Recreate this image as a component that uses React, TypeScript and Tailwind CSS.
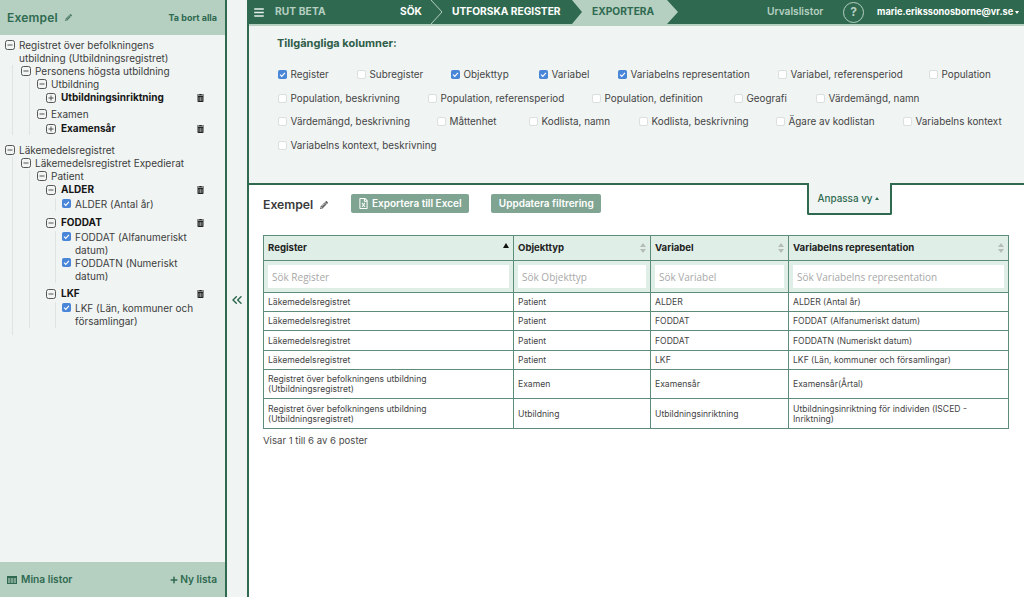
import React from "react";
import { FaBars, FaPencilAlt, FaPlus, FaRegFileExcel, FaTrashAlt } from "react-icons/fa";
import { ChevronsLeft } from "lucide-react";

const font = "font-['Inter','Liberation_Sans',sans-serif]";

function Toggle({ plus }: { plus?: boolean }) {
  return (
    <svg width="10" height="10" viewBox="0 0 10 10" className="shrink-0" fill="none" stroke="#444" strokeWidth="0.9">
      <rect x="0.5" y="0.5" width="9" height="9" rx="2" />
      <path d="M2.5 5h5" />
      {plus && <path d="M5 2.5v5" />}
    </svg>
  );
}

function Check({ on, size = 9 }: { on?: boolean; size?: number }) {
  return (
    <svg width={size} height={size} viewBox="0 0 10 10" className="shrink-0">
      {on ? (
        <>
          <rect width="10" height="10" rx="2" fill="#4a86d8" />
          <path d="M2.3 5.2l1.9 1.9 3.5-4" stroke="#fff" strokeWidth="1.3" fill="none" />
        </>
      ) : (
        <rect x="0.5" y="0.5" width="9" height="9" rx="2" fill="#fff" stroke="#d5d9d8" />
      )}
    </svg>
  );
}

function Label({ children, plus, w }: { children: React.ReactNode; plus?: boolean; w: string }) {
  return (
    <div className="flex items-start h-auto">
      <div className="mt-px w-[14px] shrink-0"><Toggle plus={plus} /></div>
      <div className={`${w} text-[10px] leading-[13px] text-[#3d3d3d]`}>{children}</div>
    </div>
  );
}

function Bold({ text, minus, className }: { text: string; minus?: boolean; className?: string }) {
  return (
    <div className={`flex items-center h-[13px] ${className ?? ""}`}>
      <div className="w-[15px] shrink-0"><Toggle plus={!minus} /></div>
      <div className="flex-1 text-[10px] font-bold text-[#161616]">{text}</div>
      <FaTrashAlt className="w-[7px] h-[8px] text-[#222] mr-[21px]" />
    </div>
  );
}

function Leaf({ lines, tight }: { lines: string; tight?: boolean }) {
  return (
    <div className={`flex items-start ${tight ? "" : "mt-[2px]"}`}>
      <div className="w-[13px] shrink-0 pt-[1px]"><Check on /></div>
      <div className="w-[125px] text-[10px] leading-[13px] text-[#3d3d3d]">{lines}</div>
    </div>
  );
}

function Sidebar() {
  return (
    <aside className="w-[225px] shrink-0 flex flex-col bg-[#f0f4f3]">
      <div className="h-[35px] bg-[#b5cfc1] flex items-center pl-[7px] pr-[8px] shrink-0">
        <span className="text-[12px] font-semibold text-[#2f6a50] tracking-[0.2px]">Exempel</span>
        <FaPencilAlt className="w-[7px] h-[7px] ml-[7px] text-[#4d7d66]" />
        <span className="ml-auto text-[9px] font-bold text-[#2f6a50]">Ta bort alla</span>
      </div>
      <div className="flex-1 pl-[5px] pt-[4px]">
        <Label w="w-[165px]">Registret över befolkningens utbildning (Utbildningsregistret)</Label>
        <div className="ml-[7px] border-l border-[#dfe4e2] pl-[8px]">
          <Label w="w-[160px]">Personens högsta utbildning</Label>
          <div className="ml-[8px] border-l border-[#dfe4e2] pl-[7px]">
            <Label w="w-[160px]">Utbildning</Label>
            <div className="ml-[9px]"><Bold text="Utbildningsinriktning" /></div>
            <div className="mt-[4px]"><Label w="w-[160px]">Examen</Label></div>
            <div className="ml-[9px] mt-px"><Bold text="Examensår" /></div>
          </div>
        </div>
        <div className="mt-[9px]"><Label w="w-[165px]">Läkemedelsregistret</Label></div>
        <div className="ml-[7px] border-l border-[#dfe4e2] pl-[8px] pb-[7px]">
          <Label w="w-[165px]">Läkemedelsregistret Expedierat</Label>
          <div className="ml-[8px] border-l border-[#dfe4e2] pl-[7px]">
            <Label w="w-[160px]">Patient</Label>
            <div className="ml-[9px]">
              <Bold text="ALDER" minus />
              <div className="ml-[9px] border-l border-[#dfe4e2] pl-[6px]"><Leaf lines="ALDER (Antal år)" /></div>
              <Bold text="FODDAT" minus className="mt-[5px]" />
              <div className="ml-[9px] border-l border-[#dfe4e2] pl-[6px]">
                <Leaf lines="FODDAT (Alfanumeriskt datum)" />
                <Leaf tight lines="FODDATN (Numeriskt datum)" />
              </div>
              <Bold text="LKF" minus className="mt-[4px]" />
              <div className="ml-[9px] border-l border-[#dfe4e2] pl-[6px]"><Leaf lines="LKF (Län, kommuner och församlingar)" /></div>
            </div>
          </div>
        </div>
      </div>
      <div className="h-[35px] bg-[#b5cfc1] flex items-center pl-[7px] pr-[8px] shrink-0 text-[#2f6a50]">
        <svg width="10" height="8" viewBox="0 0 10 8" className="mr-[4px]">
          <rect width="10" height="8" fill="#2f6a50" />
          <rect x="1" y="2" width="8" height="5" fill="#7fa592" />
          <path d="M3.5 2v5M6.5 2v5" stroke="#2f6a50" strokeWidth="0.6" />
        </svg>
        <span className="text-[10.2px] font-semibold">Mina listor</span>
        <FaPlus className="ml-auto w-[8px] h-[8px] mr-[2px]" />
        <span className="text-[10.2px] font-semibold">Ny lista</span>
      </div>
    </aside>
  );
}

function Nav() {
  return (
    <header className="h-[26px] shrink-0 bg-[#b5cfc1] pb-[2px]">
      <div className="h-[24px] bg-[#2f6a50] flex items-center text-[10.2px] font-bold text-white">
        <FaBars className="ml-[4px] w-[12px] h-[11px] text-[#e8efec]" />
        <span className="ml-[10px] w-[125px] text-[#b5cfc1] tracking-[0.1px]">RUT BETA</span>
        <span className="w-[30px]">SÖK</span>
        <svg width="14" height="24" viewBox="0 0 14 24" className="shrink-0"><path d="M1 0l11 12L1 24" stroke="#b5cfc1" strokeWidth="1" fill="none" /></svg>
        <span className="ml-[8px] w-[120px] whitespace-nowrap">UTFORSKA REGISTER</span>
        <div className="w-[106px] h-[24px] bg-[#b5cfc1] text-[#2f6a50] flex items-center pl-[20px] [clip-path:polygon(0_0,95px_0,100%_50%,95px_100%,0_100%,10px_50%)]">EXPORTERA</div>
        <span className="ml-[89px] font-semibold text-[#b5cfc1] w-[76px]">Urvalslistor</span>
        <div className="w-[21px] h-[21px] rounded-full border border-[#b5cfc1] text-[#b5cfc1] flex items-center justify-center text-[12px]">?</div>
        <span className="ml-[13px] text-[9.2px] whitespace-nowrap">marie.erikssonosborne@vr.se</span>
        <span className="ml-[2px] w-0 h-0 border-x-[2.5px] border-x-transparent border-t-[3px] border-t-white" />
      </div>
    </header>
  );
}

const rows: { w: string; t: string; on?: boolean }[][] = [
  [
    { w: "w-[79px]", t: "Register", on: true },
    { w: "w-[94px]", t: "Subregister" },
    { w: "w-[88px]", t: "Objekttyp", on: true },
    { w: "w-[79px]", t: "Variabel", on: true },
    { w: "w-[160px]", t: "Variabelns representation", on: true },
    { w: "w-[151px]", t: "Variabel, referensperiod" },
    { w: "w-[70px]", t: "Population" },
  ],
  [
    { w: "w-[150px]", t: "Population, beskrivning" },
    { w: "w-[164px]", t: "Population, referensperiod" },
    { w: "w-[142px]", t: "Population, definition" },
    { w: "w-[82px]", t: "Geografi" },
    { w: "w-[120px]", t: "Värdemängd, namn" },
  ],
  [
    { w: "w-[159px]", t: "Värdemängd, beskrivning" },
    { w: "w-[92px]", t: "Måttenhet" },
    { w: "w-[110px]", t: "Kodlista, namn" },
    { w: "w-[137px]", t: "Kodlista, beskrivning" },
    { w: "w-[127px]", t: "Ägare av kodlistan" },
    { w: "w-[110px]", t: "Variabelns kontext" },
  ],
  [{ w: "w-[200px]", t: "Variabelns kontext, beskrivning" }],
];

function Columns() {
  return (
    <section className="h-[159px] shrink-0 bg-[#f0f4f3] border-b-2 border-[#2f6a50] pl-[29px] relative">
      <div className="pt-[11px] -ml-px text-[11px] font-bold text-[#2f5d49] leading-[13px]">Tillgängliga kolumner:</div>
      <div className="mt-[18px] flex flex-col gap-[10.5px]">
        {rows.map((r, i) => (
          <div key={i} className="flex h-[13px] items-center">
            {r.map((c) => (
              <div key={c.t} className={`${c.w} shrink-0 flex items-center gap-[3.5px] text-[9.9px] text-[#454545] whitespace-nowrap`}>
                <Check on={c.on} />
                <span>{c.t}</span>
              </div>
            ))}
          </div>
        ))}
      </div>
      <div className="absolute left-[558px] top-[157px] w-[85px] h-[32px] pt-px pr-[2px] bg-[#f0f4f3] border-2 border-t-0 border-[#2f6a50] rounded-b-[2px] flex items-center justify-center text-[9.9px] font-medium text-[#2f6a50]">
        Anpassa vy <span className="ml-[3px] w-0 h-0 border-x-[2.5px] border-x-transparent border-b-[3px] border-b-[#2f6a50]" />
      </div>
    </section>
  );
}

function Sort({ active }: { active?: boolean }) {
  return active ? (
    <svg width="6" height="5" viewBox="0 0 6 5" className="self-start mt-[7px] shrink-0"><path d="M3 0l3 5H0z" fill="#111" /></svg>
  ) : (
    <svg width="6" height="10" viewBox="0 0 6 10" className="shrink-0"><path d="M3 0l3 4H0zM3 10L0 6h6z" fill="#b5bcb9" /></svg>
  );
}

const heads = ["Register", "Objekttyp", "Variabel", "Variabelns representation"];
const widthClass = ["w-[249px]", "w-[137px]", "w-[138px]", "w-[220px]"];

const data: { h: string; c: string[] }[] = [
  { h: "h-[19px]", c: ["Läkemedelsregistret", "Patient", "ALDER", "ALDER (Antal år)"] },
  { h: "h-[19px]", c: ["Läkemedelsregistret", "Patient", "FODDAT", "FODDAT (Alfanumeriskt datum)"] },
  { h: "h-[20px]", c: ["Läkemedelsregistret", "Patient", "FODDAT", "FODDATN (Numeriskt datum)"] },
  { h: "h-[19px]", c: ["Läkemedelsregistret", "Patient", "LKF", "LKF (Län, kommuner och församlingar)"] },
  { h: "h-[29px]", c: ["Registret över befolkningens utbildning (Utbildningsregistret)", "Examen", "Examensår", "Examensår(Årtal)"] },
  { h: "h-[30px]", c: ["Registret över befolkningens utbildning (Utbildningsregistret)", "Utbildning", "Utbildningsinriktning", "Utbildningsinriktning för individen (ISCED - Inriktning)"] },
];

function Table() {
  return (
    <div className="w-[746px] border-x border-b border-[#5d8d78]">
      <div className="flex h-[25px] bg-[#dfeee6] border-t border-[#5d8d78]">
        {heads.map((h, i) => (
          <div key={h} className={`${widthClass[i]} shrink-0 flex items-center justify-between pl-[4px] pr-[4px] text-[9.6px] font-bold text-[#222] ${i ? "border-l border-[#5d8d78]" : ""}`}>
            <span>{h}</span>
            <Sort active={i === 0} />
          </div>
        ))}
      </div>
      <div className="flex h-[32px] bg-[#dfeee6] border-t border-[#5d8d78]">
        {heads.map((h, i) => (
          <div key={h} className={`${widthClass[i]} shrink-0 px-[4px] py-[4px] ${i ? "border-l border-[#5d8d78]" : ""}`}>
            <input
              readOnly
              placeholder={`Sök ${h}`}
              className="block w-full h-[23px] bg-white px-[4px] text-[10px] font-['Open_Sans',sans-serif] placeholder:text-[#a8a8a8] outline-none"
            />
          </div>
        ))}
      </div>
      {data.map((r, ri) => (
        <div key={ri} className={`flex ${r.h} border-t border-[#5d8d78] bg-white`}>
          {r.c.map((c, i) => (
            <div key={i} className={`${widthClass[i]} shrink-0 flex items-center pl-[4px] pr-[8px] text-[8.6px] leading-[10px] text-[#444] ${i ? "border-l border-[#5d8d78]" : ""}`}>
              <span>{c}</span>
            </div>
          ))}
        </div>
      ))}
    </div>
  );
}

export default function App() {
  return (
    <div className={`${font} w-[1024px] h-[597px] flex bg-white overflow-hidden`}>
      <Sidebar />
      <div className="w-[24px] shrink-0 bg-[#f0f4f3] border-x-2 border-[#2f6a50] flex items-center justify-center pt-[2px]">
        <ChevronsLeft className="w-[16px] h-[16px] text-[#2f6a50]" strokeWidth={2.2} />
      </div>
      <main className="flex-1 flex flex-col min-w-0">
        <Nav />
        <Columns />
        <div className="flex items-center pl-[14px] h-[37px]">
          <span className="mt-[3px] text-[12.2px] font-semibold text-[#3a3a3a]">Exempel</span>
          <FaPencilAlt className="mt-[3px] w-[8px] h-[8px] ml-[7px] text-[#666]" />
          <button className="ml-[23px] h-[19px] w-[118px] rounded-[2px] bg-[#7fa592] text-white text-[10px] font-semibold flex items-center justify-center gap-[4px]">
            <FaRegFileExcel className="w-[9px] h-[11px]" />
            Exportera till Excel
          </button>
          <button className="ml-[22px] h-[19px] w-[110px] rounded-[2px] bg-[#7fa592] text-white text-[10px] font-semibold">Uppdatera filtrering</button>
        </div>
        <div className="pl-[14px] pt-[13px]">
          <Table />
          <div className="mt-[5px] text-[9.6px] text-[#4a4a4a]">Visar 1 till 6 av 6 poster</div>
        </div>
      </main>
    </div>
  );
}
